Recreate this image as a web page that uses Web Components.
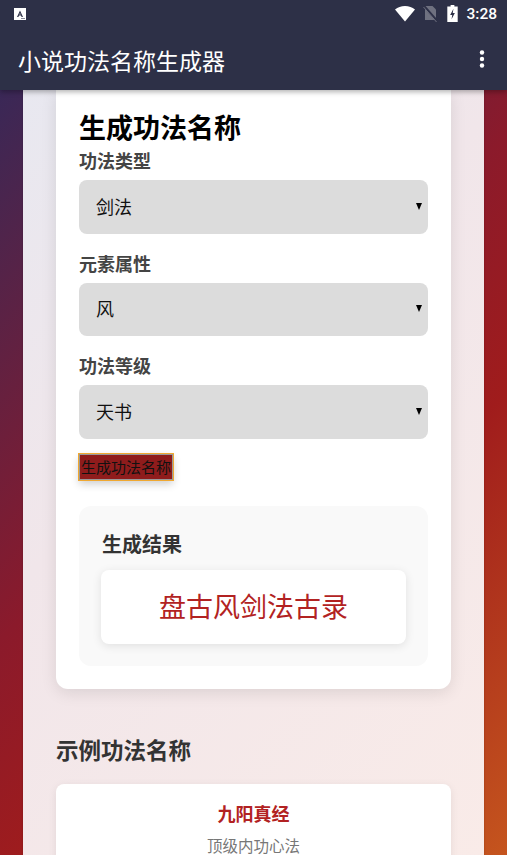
<!DOCTYPE html>
<html lang="zh">
<head>
<meta charset="utf-8">
<title>小说功法名称生成器</title>
<style>
  html, body { margin: 0; height: 100%; }
  body { font-family: "Noto Sans CJK SC", "Noto Sans", sans-serif; overflow: hidden; }
</style>
</head>
<body>
<app-shell>
  <status-bar slot="top"></status-bar>
  <app-bar slot="top">小说功法名称生成器</app-bar>
  <gen-card>
    <h-title>生成功法名称</h-title>
    <form-select label="功法类型" value="剑法"></form-select>
    <form-select label="元素属性" value="风"></form-select>
    <form-select label="功法等级" value="天书"></form-select>
    <gen-button>生成功法名称</gen-button>
    <result-box title="生成结果" value="盘古风剑法古录"></result-box>
  </gen-card>
  <example-list title="示例功法名称">
    <example-card name="九阳真经" desc="顶级内功心法"></example-card>
  </example-list>
</app-shell>

<script>
(function () {
  function define(name, html, init) {
    customElements.define(name, class extends HTMLElement {
      constructor() {
        super();
        this.attachShadow({ mode: "open" }).innerHTML = html;
      }
      connectedCallback() {
        if (init) init(this, this.shadowRoot);
      }
    });
  }

  define("app-shell", `
    <style>
      :host {
        display: flex;
        flex-direction: column;
        height: 855px;
        overflow: hidden;
        background: linear-gradient(135deg, #2c2a5e 0%, #8b1a2b 47%, #a01c1c 66%, #d2691e 112%);
      }
      header { position: relative; z-index: 2; box-shadow: 0 2px 5px rgba(0,0,0,.3); }
      main {
        flex: 1;
        margin: 0 23px;
        padding: 0 33px;
        overflow: hidden;
        background: linear-gradient(135deg, #e8e8f0 0%, #f1e6ea 40%, #f9ebe8 100%);
        box-shadow: 0 0 2px rgba(0,0,0,.2);
      }
    </style>
    <header><slot name="top"></slot></header>
    <main><slot></slot></main>
  `);

  define("status-bar", `
    <style>
      :host {
        display: flex;
        align-items: center;
        height: 30px;
        padding: 0 10px 3px 14px;
        box-sizing: border-box;
        background: #2d3047;
        color: #fff;
        font: 500 15.500px Roboto, sans-serif;
      }
      .a { width: 12px; height: 12px; background: #fff; display: block; }
      .right { margin-left: auto; display: flex; align-items: center; }
      svg { display: block; }
      span { margin-left: 8px; }
    </style>
    <svg class="a" viewBox="0 0 12 12"><rect width="12" height="12" fill="#fff"/><path d="M3 9 6 2.500 9 9H7.600L7 7.600H5L4.400 9ZM5.400 6.400h1.200L6 5Z" fill="#2d3047"/><rect x="7" y="10" width="4" height="1" fill="#8a8c99"/></svg>
    <div class="right">
      <svg width="20" height="16" viewBox="0 0 20 16" style="margin-right:8px"><path d="M0 3.500C2.700 1.300 6.200 0 10 0s7.300 1.300 10 3.500L10 15.500Z" fill="#fff"/></svg>
      <svg width="15" height="17" viewBox="0 0 15 17" style="margin-right:9px"><path d="M2 1h7.500L13 4.500V15H2Z" fill="#6f7180"/><path d="M1 1 14.500 16.500" stroke="#2d3047" stroke-width="2.400"/><path d="M.5 2 13.500 17" stroke="#6f7180" stroke-width="1"/></svg>
      <svg width="11" height="17" viewBox="0 0 11 18"><path d="M3.500 0h4v1.500H11V18H0V1.500h3.500Z" fill="#fff"/><path d="M6.500 4 3 10.500h2.200L4.500 15 8 8.500H5.800Z" fill="#2d3047"/></svg>
      <span>3:28</span>
    </div>
  `);

  define("app-bar", `
    <style>
      :host {
        display: flex;
        align-items: center;
        height: 60px;
        padding: 0 22px 0 18px;
        background: #2d3047;
        color: #fff;
        font-size: 23px;
        line-height: 30px;
      }
      svg { margin: 0 0 2px auto; display: block; }
    </style>
    <slot></slot>
    <svg width="6" height="18" viewBox="0 0 6 18"><circle cx="3" cy="2.500" r="2.200" fill="#fff"/><circle cx="3" cy="9" r="2.200" fill="#fff"/><circle cx="3" cy="15.500" r="2.200" fill="#fff"/></svg>
  `);

  define("gen-card", `
    <style>
      :host {
        display: block;
        padding: 17px 23px 23px;
        background: #fff;
        border-radius: 0 0 12px 12px;
        box-shadow: 0 4px 16px rgba(0,0,0,.1);
      }
    </style>
    <slot></slot>
  `);

  define("h-title", `
    <style>
      :host {
        display: block;
        margin-bottom: 1px;
        font-size: 27px;
        font-weight: 700;
        line-height: 39px;
        color: #000;
      }
    </style>
    <slot></slot>
  `);

  define("form-select", `
    <style>
      :host { display: block; margin-bottom: 16px; }
      label {
        display: block;
        font-size: 18px;
        font-weight: 700;
        line-height: 26px;
        color: #444;
        margin-bottom: 7px;
      }
      .box {
        position: relative;
        height: 53.500px;
        display: flex;
        align-items: center;
        padding-left: 17px;
        border-radius: 8px;
        background: #dcdcdc;
        color: #111;
        font-size: 18px;
      }
      .box span { margin-top: -2px; }
      .arrow {
        position: absolute;
        right: 6px;
        top: 50%;
        margin-top: -4px;
        border: solid transparent;
        border-width: 7px 3.500px 0;
        border-top-color: #000;
      }
    </style>
    <label id="l"></label>
    <div class="box"><span id="v"></span><i class="arrow"></i></div>
  `, (el, root) => {
    root.getElementById("l").textContent = el.getAttribute("label");
    root.getElementById("v").textContent = el.getAttribute("value");
  });

  define("gen-button", `
    <style>
      :host { display: block; margin-top: -.5px; }
      button {
        display: block;
        width: 94px;
        height: 26px;
        margin: 0;
        padding: 0;
        border: 1px solid #999;
        outline: 1px solid #f0a830;
        outline-offset: 0;
        box-sizing: border-box;
        background: #8f1c1c;
        color: #111;
        font: 15px/24px "Noto Sans CJK SC", sans-serif;
        white-space: nowrap;
        box-shadow: 0 4px 8px rgba(0,0,0,.2);
      }
    </style>
    <button><slot></slot></button>
  `);

  define("result-box", `
    <style>
      :host {
        display: block;
        margin-top: 26px;
        padding: 22px 22px 22px;
        background: #f9f9f9;
        border-radius: 12px;
      }
      h3 {
        margin: 0 0 11px 1px;
        font-size: 20px;
        font-weight: 700;
        line-height: 31px;
        color: #333;
      }
      div {
        height: 74px;
        line-height: 72px;
        text-align: center;
        background: #fff;
        border-radius: 8px;
        box-shadow: 0 2px 10px rgba(0,0,0,.1);
        color: #b22222;
        font-size: 27px;
      }
    </style>
    <h3 id="t"></h3>
    <div id="v"></div>
  `, (el, root) => {
    root.getElementById("t").textContent = el.getAttribute("title");
    root.getElementById("v").textContent = el.getAttribute("value");
  });

  define("example-list", `
    <style>
      :host { display: block; margin-top: 43px; }
      h2 {
        margin: 0 0 18px;
        font-size: 22.500px;
        font-weight: 700;
        line-height: 34px;
        color: #333;
      }
    </style>
    <h2 id="t"></h2>
    <slot></slot>
  `, (el, root) => {
    root.getElementById("t").textContent = el.getAttribute("title");
  });

  define("example-card", `
    <style>
      :host {
        display: block;
        padding: 15px 16px 20px;
        background: #fff;
        border-radius: 8px;
        box-shadow: 0 2px 8px rgba(0,0,0,.08);
        text-align: center;
      }
      b { display: block; font-size: 18px; line-height: 28px; color: #b22222; }
      span { display: block; margin-top: 6px; font-size: 15.500px; line-height: 24px; color: #777; }
    </style>
    <b id="n"></b>
    <span id="d"></span>
  `, (el, root) => {
    root.getElementById("n").textContent = el.getAttribute("name");
    root.getElementById("d").textContent = el.getAttribute("desc");
  });
})();
</script>
</body>
</html>
